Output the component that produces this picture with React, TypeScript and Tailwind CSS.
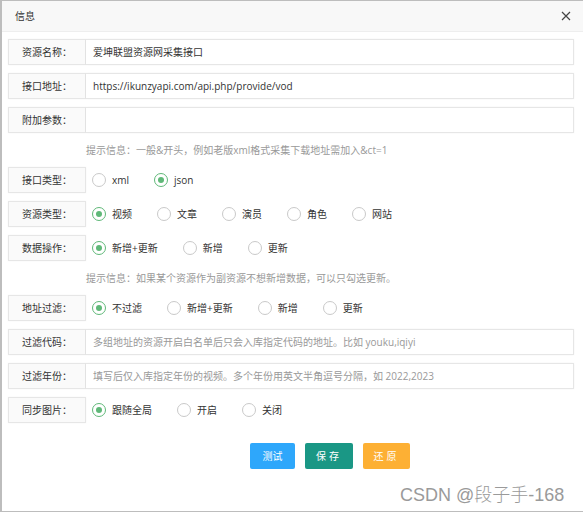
import React from "react";

const FONT = { fontFamily: '"Open Sans", "Noto Sans CJK SC", sans-serif' };

function Label({ text }: { text: string }) {
  return (
    <div className="w-[78px] h-[26px] shrink-0 flex items-center justify-center border border-[#e6e6e6] bg-[#fafafa] text-[10px] text-[#333] shadow-[0_0_2px_rgba(0,0,0,0.04)]">
      {text}
    </div>
  );
}

function InputRow({ label, value, placeholder }: { label: string; value?: string; placeholder?: string }) {
  return (
    <div className="flex h-[26px] mr-[9px]">
      <Label text={label} />
      <div className="flex-1 flex items-center border border-l-0 border-[#e6e6e6] bg-white px-[7px] text-[10px] shadow-[0_0_2px_rgba(0,0,0,0.05)]">
        {value ? <span className="text-[#333]">{value}</span> : <span className="text-[#999]">{placeholder}</span>}
      </div>
    </div>
  );
}

function Radio({ label, checked }: { label: string; checked?: boolean }) {
  return (
    <div className="flex items-center gap-[6px] mr-[25px]">
      <span
        className={`w-[14px] h-[14px] rounded-full border flex items-center justify-center bg-white ${
          checked ? "border-[#5fb878]" : "border-[#c9c9c9]"
        }`}
      >
        {checked && <span className="w-[6px] h-[6px] rounded-full bg-[#5fb878]" />}
      </span>
      <span className="text-[10px] text-[#333]">{label}</span>
    </div>
  );
}

function RadioRow({ label, options, checked }: { label: string; options: string[]; checked: number }) {
  return (
    <div className="flex h-[26px] items-center">
      <Label text={label} />
      <div className="flex items-center pl-[6px]">
        {options.map((o, i) => (
          <Radio key={o} label={o} checked={i === checked} />
        ))}
      </div>
    </div>
  );
}

function Hint({ text }: { text: string }) {
  return <div className="h-[18px] flex items-center pl-[78px] text-[10px] text-[#999]">{text}</div>;
}

export default function App() {
  return (
    <div className="relative w-[583px] h-[514px] bg-white overflow-hidden" style={FONT}>
      <div className="h-[512px] border-l-2 border-t border-b border-[#bdbdbd] flex flex-col">
        {/* header */}
        <div className="h-[31px] shrink-0 flex items-center justify-between pl-[13px] pr-[12px] bg-[#f8f8f8] border-b border-[#eee]">
          <span className="text-[10px] text-[#333]">信息</span>
          <svg width="10" height="10" viewBox="0 0 10 10" className="text-[#444]">
            <path d="M1 1 L9 9 M9 1 L1 9" stroke="currentColor" strokeWidth="1.2" fill="none" />
          </svg>
        </div>

        <div className="flex flex-col gap-2 pl-[6px] pt-[7px]">
          <InputRow label="资源名称：" value="爱坤联盟资源网采集接口" />
          <InputRow label="接口地址：" value="https://ikunzyapi.com/api.php/provide/vod" />
          <InputRow label="附加参数：" />
          <Hint text="提示信息：一般&开头，例如老版xml格式采集下载地址需加入&ct=1" />
          <RadioRow label="接口类型：" options={["xml", "json"]} checked={1} />
          <RadioRow label="资源类型：" options={["视频", "文章", "演员", "角色", "网站"]} checked={0} />
          <RadioRow label="数据操作：" options={["新增+更新", "新增", "更新"]} checked={0} />
          <Hint text="提示信息：如果某个资源作为副资源不想新增数据，可以只勾选更新。" />
          <RadioRow label="地址过滤：" options={["不过滤", "新增+更新", "新增", "更新"]} checked={0} />
          <InputRow label="过滤代码：" placeholder="多组地址的资源开启白名单后只会入库指定代码的地址。比如 youku,iqiyi" />
          <InputRow label="过滤年份：" placeholder="填写后仅入库指定年份的视频。多个年份用英文半角逗号分隔，如 2022,2023" />
          <RadioRow label="同步图片：" options={["跟随全局", "开启", "关闭"]} checked={0} />
        </div>

        <div className="flex justify-center gap-[10px] pl-[84px] pr-[9px] mt-[20px]">
          <button className="w-[45px] h-[26px] rounded-[2px] bg-[#2ea7fb] text-white text-[10px]">测试</button>
          <button className="w-[48px] h-[26px] rounded-[2px] bg-[#1a9785] text-white text-[10px] tracking-[3px]">保存</button>
          <button className="w-[47px] h-[26px] rounded-[2px] bg-[#fdb034] text-white text-[10px] tracking-[3px]">还原</button>
        </div>
      </div>

      <div
        className="absolute left-[400px] top-[486px] text-[18px] text-[#9a9a9a] leading-none whitespace-nowrap"
        style={{ fontFamily: '"Liberation Sans", "Noto Sans CJK SC", sans-serif', fontWeight: 300 }}
      >
        CSDN @段子手-168
      </div>
    </div>
  );
}
